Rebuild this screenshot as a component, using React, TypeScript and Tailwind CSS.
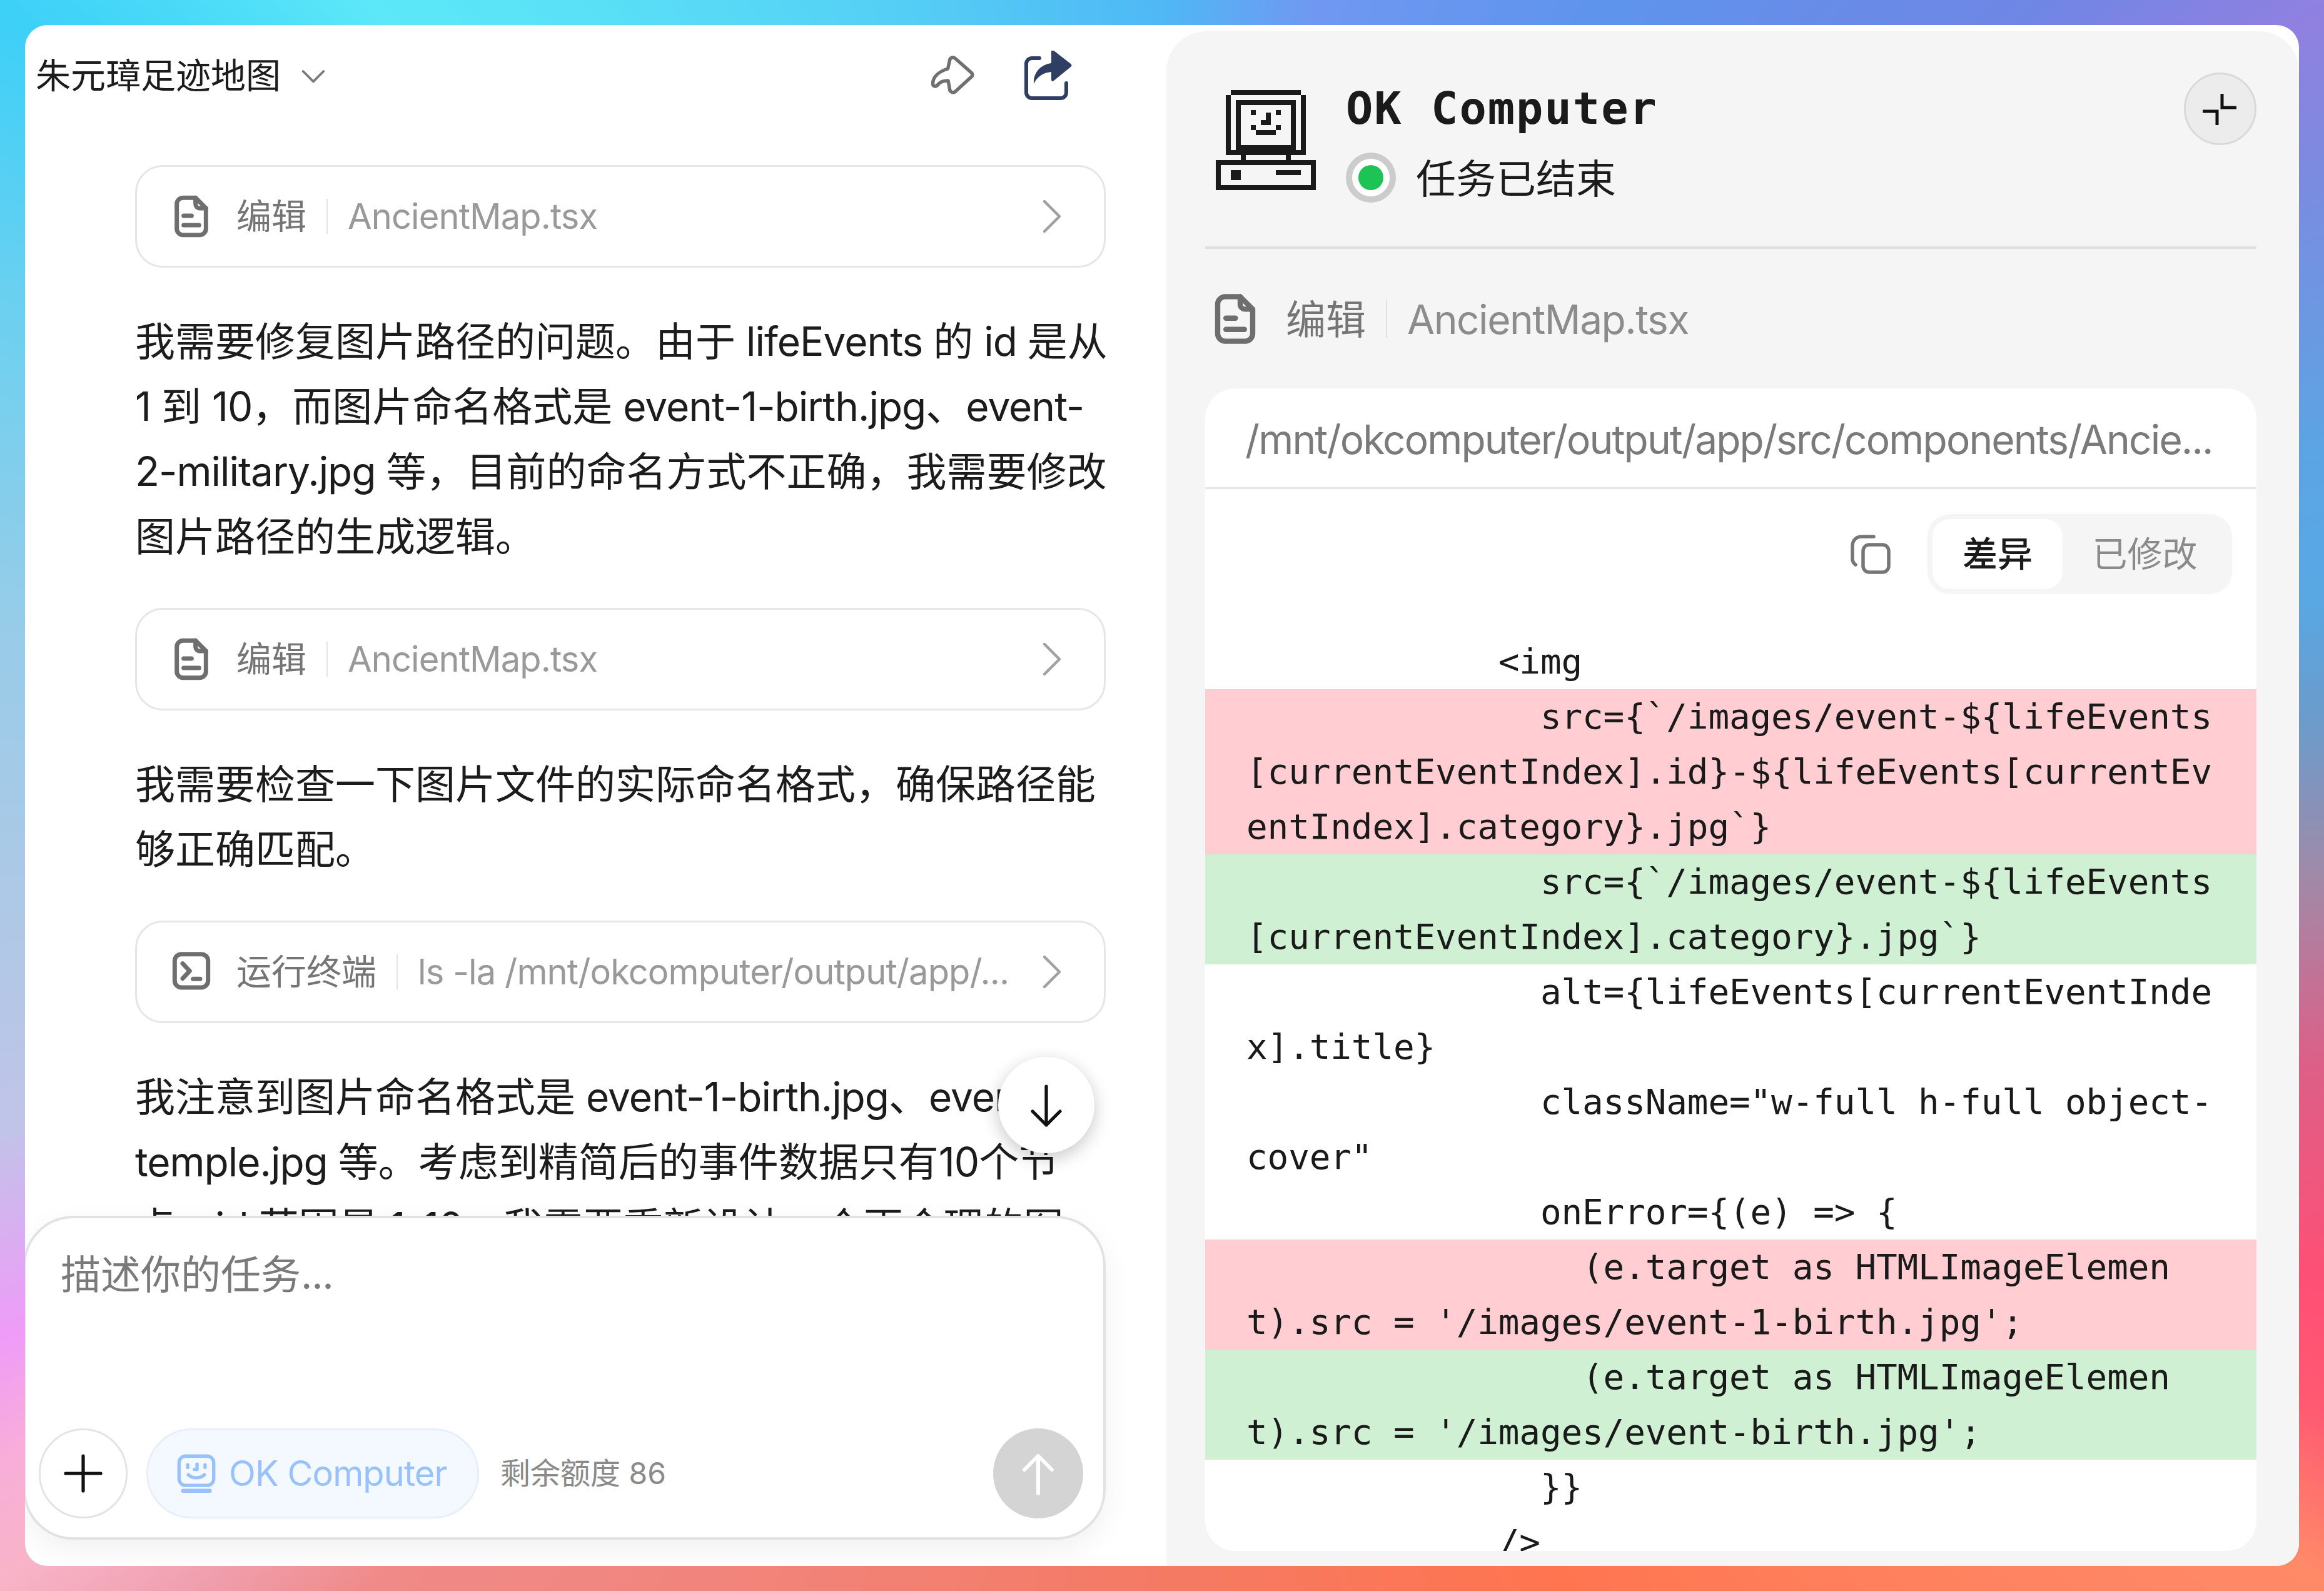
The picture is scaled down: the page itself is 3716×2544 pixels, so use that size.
import React from "react";

function DocIcon({ className }: { className: string }) {
  return (
    <svg viewBox="0 0 24 24" fill="none" stroke="currentColor" strokeWidth={2.1} strokeLinecap="round" strokeLinejoin="round" className={className}>
      <path d="M14 3.100H8a3 3 0 0 0-3 3v11.800a3 3 0 0 0 3 3h8a3 3 0 0 0 3-3V8.100z" />
      <path d="M14 3.100v3a2 2 0 0 0 2 2h3" />
      <path d="M8.300 11.700h3.800M8.300 16.200h7.400" />
    </svg>
  );
}

function TerminalIcon({ className }: { className: string }) {
  return (
    <svg viewBox="0 0 24 24" fill="none" stroke="currentColor" strokeWidth={2.1} strokeLinecap="round" strokeLinejoin="round" className={className}>
      <rect x="4" y="3.500" width="16" height="16" rx="3.200" />
      <path d="m7.800 8 3.400 3.600-3.400 3.600M12.800 15.400h3.400" />
    </svg>
  );
}

function Chevron() {
  return (
    <svg viewBox="0 0 24 24" fill="none" stroke="currentColor" strokeWidth={1.1} strokeLinecap="round" strokeLinejoin="round" className="h-[96px] w-[96px] shrink-0 text-[#a0a0a0]">
      <path d="m9 6 6 6-6 6" />
    </svg>
  );
}

function Mixed({ text, latin }: { text: string; latin: string }) {
  return (
    <>
      {text.split(/([\x00-\x7F]+)/).map((part, i) =>
        /^[\x00-\x7F]+$/.test(part) ? (
          <span key={i} className={latin}>{part}</span>
        ) : (
          <span key={i}>{part}</span>
        )
      )}
    </>
  );
}

function ToolCard({ icon, label, detail }: { icon: React.ReactNode; label: string; detail: string }) {
  return (
    <div className="flex h-[164px] items-center rounded-[44px] border-[3px] border-[#e6e6e6] bg-white pl-[47px] pr-[35px] text-[56px]">
      {icon}
      <span className="ml-[32px] whitespace-nowrap leading-none text-[#757575]">{label}</span>
      <span className="mx-[32px] h-[56px] w-[2px] bg-[#e4e4e4]" />
      <span className="min-w-0 flex-1 whitespace-nowrap leading-none tracking-[-0.016em] text-[#999999]">{detail}</span>
      <Chevron />
    </div>
  );
}

function Para({ lines }: { lines: string[] }) {
  return (
    <div className="translate-y-[2px] text-[64px] leading-[104px] text-[#1c1c1c]">
      {lines.map((l, i) => (
        <div key={i} className="whitespace-nowrap">
          <Mixed text={l} latin="tracking-[-0.016em]" />
        </div>
      ))}
    </div>
  );
}

function ComputerIcon() {
  const r: [number, number, number, number][] = [
    [3, 0, 14, 1], [2, 1, 1, 12], [17, 1, 1, 12],
    [4, 2, 12, 1], [4, 3, 1, 8], [15, 3, 1, 8], [4, 11, 12, 1],
    [7, 4, 1, 1], [12, 4, 1, 1], [10, 4.5, 1, 2.5], [9, 6, 1, 1],
    [7, 7, 1, 1], [12, 7, 1, 1], [8, 8, 4, 1],
    [3, 12, 14, 1], [5, 13, 1, 1], [14, 13, 1, 1],
    [0, 14, 20, 1], [0, 15, 1, 4], [19, 15, 1, 4], [0, 19, 20, 1],
    [3, 16, 2, 2], [12, 16, 5, 1],
  ];
  return (
    <svg viewBox="0 0 20 20" shapeRendering="crispEdges" className="mt-[11px] h-[160px] w-[160px] shrink-0" fill="#1a1a1a">
      {r.map(([x, y, w, h], i) => (
        <rect key={i} x={x} y={y} width={w} height={h} />
      ))}
    </svg>
  );
}

type Line = { t: string; k?: "del" | "add" };
const code: Line[] = [
  { t: "            <img" },
  { t: "              src={`/images/event-${lifeEvents", k: "del" },
  { t: "[currentEventIndex].id}-${lifeEvents[currentEv", k: "del" },
  { t: "entIndex].category}.jpg`}", k: "del" },
  { t: "              src={`/images/event-${lifeEvents", k: "add" },
  { t: "[currentEventIndex].category}.jpg`}", k: "add" },
  { t: "              alt={lifeEvents[currentEventInde" },
  { t: "x].title}" },
  { t: '              className="w-full h-full object-' },
  { t: 'cover"' },
  { t: "              onError={(e) => {" },
  { t: "                (e.target as HTMLImageElemen", k: "del" },
  { t: "t).src = '/images/event-1-birth.jpg';", k: "del" },
  { t: "                (e.target as HTMLImageElemen", k: "add" },
  { t: "t).src = '/images/event-birth.jpg';", k: "add" },
  { t: "              }}" },
  { t: "            />" },
];

export default function App() {
  return (
    <div className="h-[2544px] w-[3716px] overflow-hidden bg-[conic-gradient(from_0deg_at_50%_50%,#4fb8f5_0deg,#7098f2_11deg,#5e94ec_30deg,#6f86e5_48deg,#9080e0_56deg,#7a8ce0_62deg,#5ca4e4_73deg,#58a8e4_80deg,#6a9ccc_86deg,#a08aa8_94deg,#dc6088_103deg,#ff4f75_113deg,#ff5a72_118deg,#ff8a68_124deg,#ff7550_153deg,#f47a64_180deg,#f08a88_225deg,#f0a0b0_231deg,#f8b4c8_236deg,#f8aed8_240deg,#ee9cf8_245deg,#c0c4e8_254deg,#b0c8e6_263deg,#98cce8_278deg,#6cd0f0_293deg,#3dd0f8_304deg,#5ce8f8_315deg,#55d0f5_340deg,#4fb8f5_360deg)] p-[40px] font-['Inter','Noto_Sans_CJK_SC',sans-serif]">
      <div className="flex h-full w-full overflow-hidden rounded-[36px] bg-white">
        {/* Left column */}
        <div className="relative h-full w-[1825px] shrink-0 overflow-hidden">
          <div className="flex h-[162px] items-center pl-[17px] pr-[150px]">
            <span className="whitespace-nowrap text-[56px] leading-none text-[#1c1c1c]">朱元璋足迹地图</span>
            <svg viewBox="0 0 24 24" fill="none" stroke="#7a7a7a" strokeWidth={1.6} strokeLinecap="round" strokeLinejoin="round" className="ml-[24px] h-[56px] w-[56px]">
              <path d="m5 9 7 7 7-7" />
            </svg>
            <svg viewBox="0 0 80 80" fill="none" stroke="#707070" strokeWidth={5.5} strokeLinejoin="round" className="ml-auto h-[80px] w-[80px]">
              <path d="M36 13.500c3-3.500 5.500-3.500 8.500-1L70 35c2.500 2 2.500 5 0 7L45 65c-3 3-7 2-9-1l-3-16c-7 0-13 2-16 6-3 4-8 4-8.500-1 0-10 8-19 24-24z" />
            </svg>
            <svg viewBox="0 0 80 80" className="ml-[72px] h-[80px] w-[80px]">
              <path d="M27 12H15a9 9 0 0 0-9 9v46a9 9 0 0 0 9 9h46a9 9 0 0 0 9-9V52" fill="none" stroke="#2f3e63" strokeWidth={6} strokeLinecap="round" />
              <path d="M46 0c2-1 3-1 4 0l27 21c2 2 2 3 0 5L50 48c-3 2-4 0-4-2V34c-13 1-23 8-28 19-1-20 13-31 28-33V4c0-2 0-3 0-4z" fill="#2f3e63" />
            </svg>
          </div>
          <div className="flex w-[1728px] flex-col gap-[64px] pl-[176px] pt-[62px]">
            <ToolCard icon={<DocIcon className="h-[80px] w-[80px] shrink-0 text-[#6e6e6e]" />} label="编辑" detail="AncientMap.tsx" />
            <Para lines={["我需要修复图片路径的问题。由于 lifeEvents 的 id 是从", "1 到 10，而图片命名格式是 event-1-birth.jpg、event-", "2-military.jpg 等，目前的命名方式不正确，我需要修改", "图片路径的生成逻辑。"]} />
            <ToolCard icon={<DocIcon className="h-[80px] w-[80px] shrink-0 text-[#6e6e6e]" />} label="编辑" detail="AncientMap.tsx" />
            <Para lines={["我需要检查一下图片文件的实际命名格式，确保路径能", "够正确匹配。"]} />
            <ToolCard icon={<TerminalIcon className="h-[80px] w-[80px] shrink-0 text-[#6e6e6e]" />} label="运行终端" detail="ls -la /mnt/okcomputer/output/app/..." />
            <Para lines={["我注意到图片命名格式是 event-1-birth.jpg、event-2-", "temple.jpg 等。考虑到精简后的事件数据只有10个节", "点，id 范围是 1-10，我需要重新设计一个更合理的图"]} />
          </div>

          {/* Scroll-to-bottom button */}
          <div className="absolute left-[1556px] top-[1650px] flex h-[154px] w-[154px] items-center justify-center rounded-full bg-white shadow-[0_8px_28px_rgba(0,0,0,0.22)]">
            <svg viewBox="0 0 24 24" fill="none" stroke="#111111" strokeWidth={1.3} strokeLinecap="round" strokeLinejoin="round" className="h-[96px] w-[96px]">
              <path d="M12 4.500V20M6.500 14.500 12 20l5.500-5.500" />
            </svg>
          </div>

          {/* Footnote behind composer */}
          <div className="absolute -bottom-[56px] left-[583px] whitespace-nowrap text-[48px] leading-[64px] text-[#9a9a9a]">内容由 AI 生成，请仔细甄别</div>

          {/* Composer */}
          <div className="absolute -left-[3px] bottom-[42px] flex h-[518px] w-[1731px] flex-col justify-between rounded-[80px] border-[4px] border-[#e2e2e2] bg-white pb-[30px] pl-[21px] pr-[32px] pt-[50px] shadow-[0_16px_48px_rgba(0,0,0,0.06)]">
            <div className="pl-[35px] text-[64px] leading-[80px] text-[#7a7a7a]">
              <Mixed text="描述你的任务..." latin="tracking-[-0.02em]" />
            </div>
            <div className="flex items-center">
              <div className="flex h-[144px] w-[142px] shrink-0 items-center justify-center rounded-full border-[3px] border-[#e4e4e4]">
                <svg viewBox="0 0 24 24" fill="none" stroke="#111111" strokeWidth={1.3} strokeLinecap="round" className="h-[96px] w-[96px]">
                  <path d="M12 5v14M5 12h14" />
                </svg>
              </div>
              <div className="ml-[30px] flex h-[144px] w-[532px] shrink-0 items-center rounded-full border-[3px] border-[#e8effb] bg-[#f4f8ff] pl-[45px] text-[56px] leading-none text-[#97c2ff]">
                <svg viewBox="0 0 60 60" fill="none" stroke="#97c2ff" strokeWidth={5} strokeLinecap="round" strokeLinejoin="round" className="h-[64px] w-[64px] shrink-0">
                  <rect x="4" y="4" width="52" height="44" rx="10" />
                  <path d="M17 17v4M43 17v4M31 16v8h-4M18 32c6 6 18 6 24 0" />
                  <path d="M10 56h40" strokeWidth={6} />
                </svg>
                <span className="ml-[20px] whitespace-nowrap tracking-[-0.016em]">OK Computer</span>
              </div>
              <span className="ml-[34px] whitespace-nowrap text-[48px] leading-none text-[#8a8a8a]">剩余额度 86</span>
              <div className="ml-auto flex h-[144px] w-[144px] shrink-0 items-center justify-center rounded-full bg-[#d4d4d4]">
                <svg viewBox="0 0 24 24" fill="none" stroke="#ffffff" strokeWidth={1.5} strokeLinecap="round" strokeLinejoin="round" className="h-[96px] w-[96px]">
                  <path d="M12 20V5M6.500 10.500 12 5l5.500 5.500" />
                </svg>
              </div>
            </div>
          </div>
        </div>

        {/* Right column */}
        <div className="mt-[10px] flex min-w-0 flex-1 flex-col rounded-t-[64px] bg-[#f5f5f5] pl-[62px] pr-[68px]">
          <div className="flex h-[348px] shrink-0 items-start justify-between border-b-[4px] border-[#dedede] pt-[66px]">
            <div className="mt-[17px] flex gap-[48px] pl-[17px]">
              <ComputerIcon />
              <div className="flex flex-col gap-[31px]">
                <div className="h-[80px] whitespace-nowrap font-['DejaVu_Sans_Mono',monospace] text-[72px] font-bold leading-[80px] tracking-[2px] text-[#1a1a1a]">OK Computer</div>
                <div className="flex h-[80px] items-center gap-[32px]">
                  <div className="flex h-[80px] w-[80px] items-center justify-center rounded-full border-[10px] border-[#cccccc] bg-white">
                    <div className="h-[40px] w-[40px] rounded-full bg-[#1dc355]" />
                  </div>
                  <span className="whitespace-nowrap pt-[4px] text-[64px] leading-none text-[#1c1c1c]">任务已结束</span>
                </div>
              </div>
            </div>
            <div className="flex h-[116px] w-[116px] items-center justify-center rounded-full border-[3px] border-[#d9d9d9] bg-[#ececec]">
              <svg viewBox="0 0 110 110" fill="none" stroke="#111111" strokeWidth={5} strokeLinecap="butt" strokeLinejoin="miter" className="h-[110px] w-[110px]">
                <path d="M58 31v22h23M27 59h23v22" />
              </svg>
            </div>
          </div>

          <div className="flex h-[223px] shrink-0 items-center text-[64px] leading-none">
            <DocIcon className="h-[96px] w-[96px] shrink-0 text-[#6e6e6e]" />
            <span className="ml-[33px] whitespace-nowrap pt-[2px] text-[#757575]">编辑</span>
            <span className="mx-[32px] h-[60px] w-[2px] bg-[#e0e0e0]" />
            <span className="whitespace-nowrap pt-[2px] tracking-[-0.023em] text-[#8c8c8c]">AncientMap.tsx</span>
          </div>

          <div className="mb-[24px] flex min-h-0 flex-1 flex-col overflow-hidden rounded-[48px] bg-white">
            <div className="flex h-[161px] shrink-0 items-center overflow-hidden whitespace-nowrap border-b-[3px] border-[#e6e6e6] pl-[64px] pt-[5px] text-[64px] leading-none tracking-[-0.029em] text-[#7a7a7a]">
              /mnt/okcomputer/output/app/src/components/Ancie...
            </div>
            <div className="flex h-[232px] shrink-0 items-start justify-end pr-[39px] pt-[40px]">
              <svg viewBox="0 0 64 64" fill="none" stroke="#767676" strokeWidth={5.5} strokeLinejoin="round" strokeLinecap="round" className="mr-[59px] mt-[32px] h-[64px] w-[64px]">
                <rect x="20" y="17" width="41" height="44" rx="10" />
                <path d="M37 4H18C9 4 3 10 3 19v20c0 4 2 8 5 10" />
              </svg>
              <div className="flex h-[128px] w-[487px] items-center rounded-[36px] bg-[#f5f5f5] p-[8px] text-[56px] leading-none">
                <div className="flex h-[112px] w-[208px] items-center justify-center rounded-[28px] bg-white font-medium text-[#1a1a1a]">差异</div>
                <div className="flex-1 text-center text-[#8a8a8a]">已修改</div>
              </div>
            </div>
            <div className="font-['DejaVu_Sans_Mono',monospace] text-[56px] leading-[88px] tracking-[-0.15px] text-[#1a1a1a]">
              {code.map((l, i) => (
                <div
                  key={i}
                  className={
                    "h-[88px] whitespace-pre pl-[66px] " +
                    (l.k === "del" ? "bg-[#ffcdd2]" : l.k === "add" ? "bg-[#d0f0d4]" : "")
                  }
                >
                  {l.t}
                </div>
              ))}
            </div>
          </div>
        </div>
      </div>
    </div>
  );
}
